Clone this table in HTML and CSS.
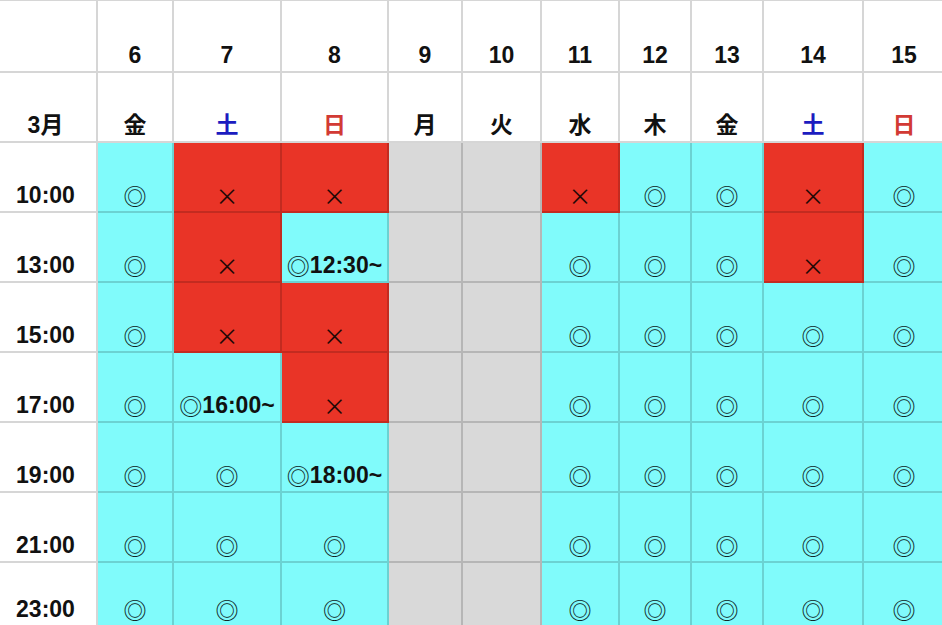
FILE: index.html
```html
<!DOCTYPE html>
<html lang="ja">
<head>
<meta charset="utf-8">
<title>3月 予約状況</title>
<link rel="stylesheet" href="styles.css">
</head>
<body>
<div class="sheet">
  <div class="c h0"></div>
  <div class="c h0">6</div><div class="c h0">7</div><div class="c h0">8</div><div class="c h0">9</div><div class="c h0">10</div>
  <div class="c h0">11</div><div class="c h0">12</div><div class="c h0">13</div><div class="c h0">14</div><div class="c h0">15</div>

  <div class="c">3月</div>
  <div class="c">金</div><div class="c sat">土</div><div class="c sun">日</div><div class="c">月</div><div class="c">火</div>
  <div class="c">水</div><div class="c">木</div><div class="c">金</div><div class="c sat">土</div><div class="c sun">日</div>

  <div class="c">10:00</div>
  <div class="c ok"><span class="mk">◎</span></div><div class="c ng"><span class="mk">×</span></div><div class="c ng"><span class="mk">×</span></div><div class="c off"></div><div class="c off"></div>
  <div class="c ng"><span class="mk">×</span></div><div class="c ok"><span class="mk">◎</span></div><div class="c ok"><span class="mk">◎</span></div><div class="c ng"><span class="mk">×</span></div><div class="c ok"><span class="mk">◎</span></div>

  <div class="c">13:00</div>
  <div class="c ok"><span class="mk">◎</span></div><div class="c ng"><span class="mk">×</span></div><div class="c ok"><span class="mk">◎</span>12:30~</div><div class="c off"></div><div class="c off"></div>
  <div class="c ok"><span class="mk">◎</span></div><div class="c ok"><span class="mk">◎</span></div><div class="c ok"><span class="mk">◎</span></div><div class="c ng"><span class="mk">×</span></div><div class="c ok"><span class="mk">◎</span></div>

  <div class="c">15:00</div>
  <div class="c ok"><span class="mk">◎</span></div><div class="c ng"><span class="mk">×</span></div><div class="c ng"><span class="mk">×</span></div><div class="c off"></div><div class="c off"></div>
  <div class="c ok"><span class="mk">◎</span></div><div class="c ok"><span class="mk">◎</span></div><div class="c ok"><span class="mk">◎</span></div><div class="c ok"><span class="mk">◎</span></div><div class="c ok"><span class="mk">◎</span></div>

  <div class="c">17:00</div>
  <div class="c ok"><span class="mk">◎</span></div><div class="c ok"><span class="mk">◎</span>16:00~</div><div class="c ng"><span class="mk">×</span></div><div class="c off"></div><div class="c off"></div>
  <div class="c ok"><span class="mk">◎</span></div><div class="c ok"><span class="mk">◎</span></div><div class="c ok"><span class="mk">◎</span></div><div class="c ok"><span class="mk">◎</span></div><div class="c ok"><span class="mk">◎</span></div>

  <div class="c">19:00</div>
  <div class="c ok"><span class="mk">◎</span></div><div class="c ok"><span class="mk">◎</span></div><div class="c ok"><span class="mk">◎</span>18:00~</div><div class="c off"></div><div class="c off"></div>
  <div class="c ok"><span class="mk">◎</span></div><div class="c ok"><span class="mk">◎</span></div><div class="c ok"><span class="mk">◎</span></div><div class="c ok"><span class="mk">◎</span></div><div class="c ok"><span class="mk">◎</span></div>

  <div class="c">21:00</div>
  <div class="c ok"><span class="mk">◎</span></div><div class="c ok"><span class="mk">◎</span></div><div class="c ok"><span class="mk">◎</span></div><div class="c off"></div><div class="c off"></div>
  <div class="c ok"><span class="mk">◎</span></div><div class="c ok"><span class="mk">◎</span></div><div class="c ok"><span class="mk">◎</span></div><div class="c ok"><span class="mk">◎</span></div><div class="c ok"><span class="mk">◎</span></div>

  <div class="c">23:00</div>
  <div class="c ok"><span class="mk">◎</span></div><div class="c ok"><span class="mk">◎</span></div><div class="c ok"><span class="mk">◎</span></div><div class="c off"></div><div class="c off"></div>
  <div class="c ok"><span class="mk">◎</span></div><div class="c ok"><span class="mk">◎</span></div><div class="c ok"><span class="mk">◎</span></div><div class="c ok"><span class="mk">◎</span></div><div class="c ok"><span class="mk">◎</span></div>
</div>
</body>
</html>
```

FILE: styles.css
```css
html, body {
  margin: 0;
  padding: 0;
  background: #ffffff;
  overflow: hidden;
}

/* the sheet is scrolled a few pixels to the left, as in the capture */
.sheet {
  display: grid;
  grid-template-columns: 103px 76px 108px 107px 74px 79px 78px 72px 72px 100px 82px;
  grid-template-rows: 72px 70px repeat(6, 70px) 64px;
  width: 951px;
  margin-left: -5px;
  border-top: 1px solid rgba(0, 0, 0, 0.16);
  font-family: "Liberation Sans", "Noto Sans CJK JP", sans-serif;
  font-weight: bold;
  font-size: 23px;
  line-height: 26px;
  color: #111111;
}

.c {
  display: flex;
  align-items: flex-end;
  justify-content: center;
  padding-bottom: 3px;
  border-right: 2px solid rgba(0, 0, 0, 0.16);
  border-bottom: 2px solid rgba(0, 0, 0, 0.16);
  white-space: nowrap;
  box-sizing: border-box;
}

.sat { color: #1c1cc0; }
.sun { color: #d23a34; }

.ok { background: #80fbfb; }
.ng { background: #e93427; }
.off { background: #d9d9d9; }

.mk {
  font-family: "Noto Sans CJK JP", sans-serif;
  font-weight: normal;
  color: #0c1a1a;
}

.ng .mk { color: #1f0806; }
```
